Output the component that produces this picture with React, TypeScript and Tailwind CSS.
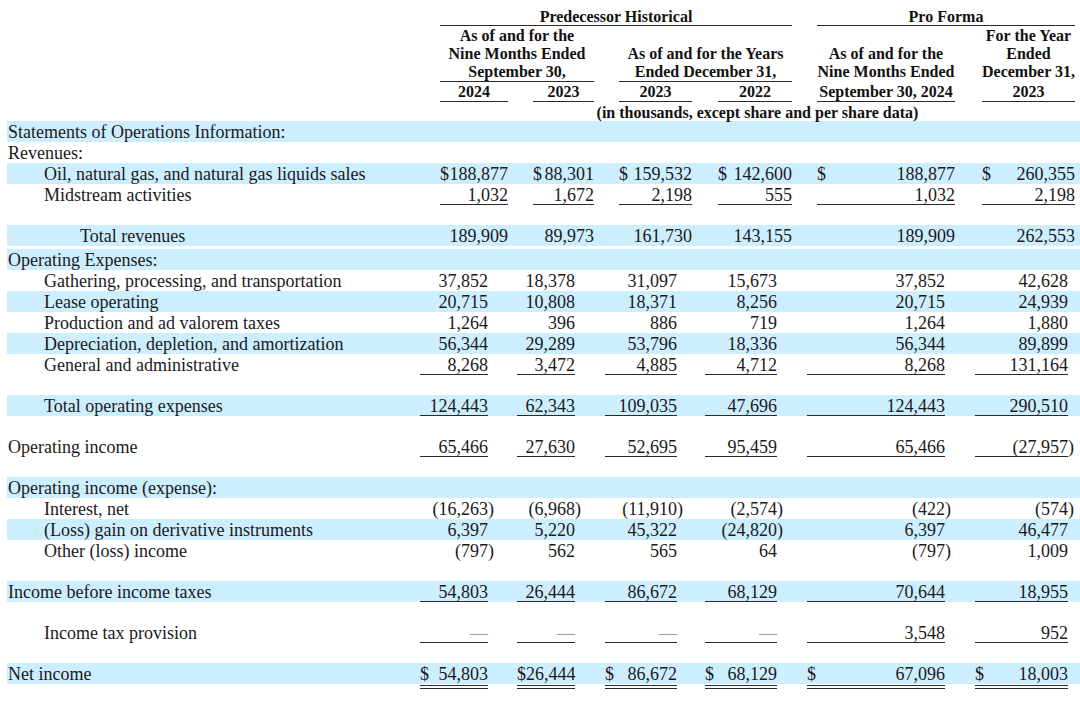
import React from 'react';

type Row = {
  label?: string;
  indent?: number;
  blue?: boolean;
  vals?: string[];
  u?: 's' | 'd';
};

const upperCols = [
  'w-[68px]',
  'ml-[25px] w-[61px]',
  'ml-[25px] w-[73px]',
  'ml-[26px] w-[74px]',
  'ml-[25px] w-[138px]',
  'ml-[27px] w-[93px]',
];

const lowerCols = [
  'w-[68px]',
  'ml-[29px] w-[58px]',
  'ml-[30px] w-[72px]',
  'ml-[28px] w-[72px]',
  'ml-[30px] w-[138px]',
  'ml-[30px] w-[93px]',
];

const upperRows: Row[] = [
  { label: 'Statements of Operations Information:', blue: true },
  { label: 'Revenues:' },
  {
    label: 'Oil, natural gas, and natural gas liquids sales',
    indent: 1,
    blue: true,
    vals: ['$188,877', '$88,301', '$159,532', '$142,600', '$188,877', '$260,355'],
  },
  {
    label: 'Midstream activities',
    indent: 1,
    vals: ['1,032', '1,672', '2,198', '555', '1,032', '2,198'],
    u: 's',
  },
  {},
  {
    label: 'Total revenues',
    indent: 2,
    blue: true,
    vals: ['189,909', '89,973', '161,730', '143,155', '189,909', '262,553'],
  },
];

const lowerRows: Row[] = [
  { label: 'Operating Expenses:', blue: true },
  {
    label: 'Gathering, processing, and transportation',
    indent: 1,
    vals: ['37,852', '18,378', '31,097', '15,673', '37,852', '42,628'],
  },
  {
    label: 'Lease operating',
    indent: 1,
    blue: true,
    vals: ['20,715', '10,808', '18,371', '8,256', '20,715', '24,939'],
  },
  {
    label: 'Production and ad valorem taxes',
    indent: 1,
    vals: ['1,264', '396', '886', '719', '1,264', '1,880'],
  },
  {
    label: 'Depreciation, depletion, and amortization',
    indent: 1,
    blue: true,
    vals: ['56,344', '29,289', '53,796', '18,336', '56,344', '89,899'],
  },
  {
    label: 'General and administrative',
    indent: 1,
    vals: ['8,268', '3,472', '4,885', '4,712', '8,268', '131,164'],
    u: 's',
  },
  {},
  {
    label: 'Total operating expenses',
    indent: 1,
    blue: true,
    vals: ['124,443', '62,343', '109,035', '47,696', '124,443', '290,510'],
    u: 's',
  },
  {},
  {
    label: 'Operating income',
    vals: ['65,466', '27,630', '52,695', '95,459', '65,466', '(27,957)'],
    u: 's',
  },
  {},
  { label: 'Operating income (expense):', blue: true },
  {
    label: 'Interest, net',
    indent: 1,
    vals: ['(16,263)', '(6,968)', '(11,910)', '(2,574)', '(422)', '(574)'],
  },
  {
    label: '(Loss) gain on derivative instruments',
    indent: 1,
    blue: true,
    vals: ['6,397', '5,220', '45,322', '(24,820)', '6,397', '46,477'],
  },
  {
    label: 'Other (loss) income',
    indent: 1,
    vals: ['(797)', '562', '565', '64', '(797)', '1,009'],
  },
  {},
  {
    label: 'Income before income taxes',
    blue: true,
    vals: ['54,803', '26,444', '86,672', '68,129', '70,644', '18,955'],
    u: 's',
  },
  {},
  {
    label: 'Income tax provision',
    indent: 1,
    vals: ['—', '—', '—', '—', '3,548', '952'],
    u: 's',
  },
  {},
  {
    label: 'Net income',
    blue: true,
    vals: ['$54,803', '$26,444', '$86,672', '$68,129', '$67,096', '$18,003'],
    u: 'd',
  },
];

const indents = ['pl-px', 'pl-[37px]', 'pl-[73px]'];

const Val: React.FC<{ v: string; cls: string; u?: 's' | 'd' }> = ({ v, cls, u }) => {
  const dollar = v.startsWith('$');
  const num = dollar ? v.slice(1) : v;
  const neg = num.startsWith('(');
  const line =
    u === 's'
      ? 'h-[21px] border-b border-[#2a2a2a]'
      : u === 'd'
        ? 'h-[21px] box-content border-b-4 border-double border-[#2a2a2a]'
        : 'h-[21px]';
  return (
    <div className={`${cls} ${line} pt-px shrink-0 flex justify-between whitespace-nowrap`}>
      <span>{dollar ? '$' : ''}</span>
      {num === '—' ? (
        <span className="text-[#9a9a9a]">—</span>
      ) : neg ? (
        <span>
          {num.slice(0, -1)}
          <span className="inline-block w-0">)</span>
        </span>
      ) : (
        <span>{num}</span>
      )}
    </div>
  );
};

const Section: React.FC<{ rows: Row[]; cols: string[]; labelW: string }> = ({ rows, cols, labelW }) => (
  <div className="pl-[7px]">
    {rows.map((r, i) =>
      r.label === undefined ? (
        <div key={i} className="h-[20px]" />
      ) : (
        <div
          key={i}
          className={`flex h-[21px] leading-[21px] ${r.blue ? 'bg-[#cceeff]' : ''}`}
        >
          <div className={`${labelW} pt-px shrink-0 whitespace-nowrap ${indents[r.indent ?? 0]}`}>
            {r.label}
          </div>
          {r.vals?.map((v, j) => <Val key={j} v={v} cls={cols[j]} u={r.u} />)}
        </div>
      ),
    )}
  </div>
);

export default function App() {
  return (
    <div className="w-[1080px] h-[709px] overflow-hidden bg-white text-[#1a1a1a] text-[18px] font-['Liberation_Serif',serif]">
      {/* Column headings */}
      <div className="flex font-bold text-[16px] leading-[18px] text-[#111]">
        <div className="w-[440px] shrink-0" />
        <div className="w-[352px] shrink-0">
          <div className="h-[26px] border-b border-[#2a2a2a] flex items-end justify-center leading-[16px]">
            Predecessor Historical
          </div>
          <div className="mt-px flex">
            <div className="w-[154px] shrink-0">
              <div className="h-[55px] border-b border-[#2a2a2a] flex flex-col justify-end items-center whitespace-nowrap">
                <div>As of and for the</div>
                <div>Nine Months Ended</div>
                <div>September 30,</div>
              </div>
              <div className="mt-px flex">
                <div className="w-[68px] h-[19px] border-b border-[#2a2a2a] text-center">2024</div>
                <div className="ml-[25px] w-[61px] h-[19px] border-b border-[#2a2a2a] text-center">2023</div>
              </div>
            </div>
            <div className="ml-[25px] w-[173px] shrink-0">
              <div className="h-[55px] border-b border-[#2a2a2a] flex flex-col justify-end items-center whitespace-nowrap">
                <div>As of and for the Years</div>
                <div>Ended December 31,</div>
              </div>
              <div className="mt-px flex">
                <div className="w-[73px] h-[19px] border-b border-[#2a2a2a] text-center">2023</div>
                <div className="ml-[26px] w-[74px] h-[19px] border-b border-[#2a2a2a] text-center">2022</div>
              </div>
            </div>
          </div>
        </div>
        <div className="ml-[25px] w-[258px] shrink-0">
          <div className="h-[26px] border-b border-[#2a2a2a] flex items-end justify-center leading-[16px]">
            Pro Forma
          </div>
          <div className="mt-px flex">
            <div className="w-[138px] h-[75px] border-b border-[#2a2a2a] flex flex-col justify-end items-center whitespace-nowrap">
              <div>As of and for the</div>
              <div>Nine Months Ended</div>
              <div className="mt-[2px]">September 30, 2024</div>
            </div>
            <div className="ml-[27px] w-[93px] h-[75px] border-b border-[#2a2a2a] flex flex-col justify-end items-center whitespace-nowrap">
              <div>For the Year</div>
              <div>Ended</div>
              <div>December 31,</div>
              <div className="mt-[2px]">2023</div>
            </div>
          </div>
        </div>
      </div>
      <div className="flex font-bold text-[16px] leading-[18px] text-[#111]">
        <div className="w-[440px] shrink-0" />
        <div className="mt-[2px] h-[17px] w-[635px] text-center whitespace-nowrap">
          (in thousands, except share and per share data)
        </div>
      </div>

      <Section rows={upperRows} cols={upperCols} labelW="w-[433px]" />
      <div className="h-[3px]" />
      <Section rows={lowerRows} cols={lowerCols} labelW="w-[413px]" />
    </div>
  );
}
